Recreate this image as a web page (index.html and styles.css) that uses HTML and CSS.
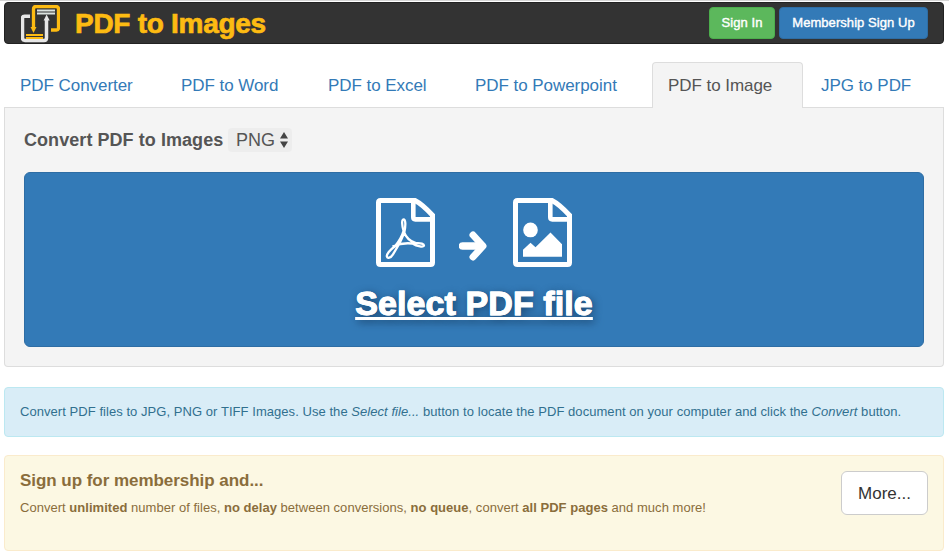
FILE: index.html
```html
<!DOCTYPE html>
<html lang="en">
<head>
<meta charset="utf-8">
<title>PDF to Images</title>
<link rel="stylesheet" href="styles.css">
</head>
<body>
<div class="page">
<header class="navbar">
  <svg class="logo" width="39" height="38" viewBox="0 0 39 38" fill="none">
    <path d="M9 11.3H3.500q-2 0-2 2V33q0 2.500 2.500 2.500h19q2.500 0 2.500-2.500V14" stroke="#e6e6e6" stroke-width="3.500"/>
    <path d="M22.600 15.500 25.600 9.500 28.700 15.500z" fill="#e6e6e6"/>
    <path d="M12.500 23V4q0-2.500 2.500-2.500h20q2.500 0 2.500 2.500V23q0 2-2 2H30" stroke="#fdbb12" stroke-width="3.300"/>
    <path d="M9.500 22h6l-3 6z" fill="#fdbb12"/>
    <path d="M16 5.600h18M16 8.500h18" stroke="#dce3e0" stroke-width="2"/>
    <path d="M5 30h17M5 33h17" stroke="#fdbb12" stroke-width="2"/>
  </svg>
  <h1 class="brand">PDF to Images</h1>
  <div class="account"><a class="btn green">Sign In</a><a class="btn blue">Membership Sign Up</a></div>
</header>
<nav class="tabs">
  <a>PDF Converter</a><a>PDF to Word</a><a>PDF to Excel</a><a>PDF to Powerpoint</a><a class="active">PDF to Image</a><a class="last">JPG to PDF</a>
</nav>
<main class="panel">
  <div class="format"><h2>Convert PDF to Images</h2>
    <button class="select"><span>PNG</span><svg width="10" height="18" viewBox="0 0 10 18" fill="#444"><path d="M1 7.500 5 1l4 6.500zM1 10.500 5 17l4-6.500z"/></svg></button>
  </div>
  <a class="upload">
    <span class="icons">
      <svg width="60" height="71" viewBox="0 0 60 70" preserveAspectRatio="none" fill="none" stroke="#fff">
        <path d="M4.500 3.500H39Q46 7 56.500 18V64.500Q56.500 66.500 54.500 66.500H4.500Q2.500 66.500 2.500 64.500V5.500Q2.500 3.500 4.500 3.500z" stroke-width="5"/>
        <path d="M37.300 4V20q0 2 2 2H57" stroke-width="4.600"/>
        <path d="M27.800 34.500C25.800 28 25.500 22 27.600 22s2.200 6 .8 12.500M27.500 33.500C30 40 34 44 40 45.500c5-.5 8 1 8 2.400 0 1.800-7 1-11.500-2-7-1-14 .5-20 3M28.500 33.500C26 43 21 50 17 56.500c-2.500 4-5.500 4-6 2.500-1-2 3-7 8-10.500 4-5 7-9.500 8.500-15" stroke-width="2.300"/>
      </svg>
      <svg class="arrow" width="30" height="30" viewBox="0 0 30 30" fill="none"><path d="M3.500 15H23" stroke="#fff" stroke-width="7.500" stroke-linecap="round"/><path d="M14 4 24 15 14 26" stroke="#fff" stroke-width="7" stroke-linecap="round" stroke-linejoin="round"/></svg>
      <svg width="60" height="71" viewBox="0 0 60 70" preserveAspectRatio="none" fill="none" stroke="#fff">
        <path d="M4.500 3.500H39Q46 7 56.500 18V64.500Q56.500 66.500 54.500 66.500H4.500Q2.500 66.500 2.500 64.500V5.500Q2.500 3.500 4.500 3.500z" stroke-width="5"/>
        <path d="M37.300 4V20q0 2 2 2H57" stroke-width="4.600"/>
        <circle cx="17.500" cy="32.500" r="7.300" fill="#fff" stroke="none"/>
        <path d="M10 59V52l7.500-7 5 4.500L37.500 35 49 46.500V59z" fill="#fff" stroke="none"/>
      </svg>
    </span>
    <span class="pick">Select PDF file</span>
  </a>
</main>
<section class="notice info"><p>Convert PDF files to JPG, PNG or TIFF Images. Use the <i>Select file...</i> button to locate the PDF document on your computer and click the <i>Convert</i> button.</p></section>
<section class="notice member">
  <div><h3>Sign up for membership and...</h3>
  <p>Convert <b>unlimited</b> number of files, <b>no delay</b> between conversions, <b>no queue</b>, convert <b>all PDF pages</b> and much more!</p></div>
  <a class="more">More...</a>
</section>
</div>
</body>
</html>
```
FILE: styles.css
```css
* { box-sizing: border-box; }
body { margin: 0; background: #fff; font-family: "Liberation Sans", Arial, sans-serif; color: #555; font-size: 13px; }
h1, h2, h3, p { margin: 0; white-space: nowrap; }
svg { display: block; flex: none; }
.page { height: 554px; border-top: 1px solid #d5d5d5; padding: 1px 5px 0 4px; overflow: hidden; }
.navbar { display: flex; height: 42px; background: #333; border: 1px solid #222; border-radius: 4px; padding: 0 15px 0 16px; align-items: center; }
.logo { margin-top: 1px; }
.brand { margin-left: 15px; padding-top: 2px; font-size: 28px; line-height: 38px; letter-spacing: -.28px; color: #fdbb12; -webkit-text-stroke: .7px #fdbb12; }
.account { display: flex; gap: 4px; margin-left: auto; }
.btn { height: 32px; line-height: 30px; border: 1px solid; border-radius: 4px; color: #fff; text-align: center; letter-spacing: .06px; -webkit-text-stroke: .4px #fff; }
.green { width: 66px; background: #5cb85c; border-color: #4cae4c; }
.blue { width: 149px; background: #337ab7; border-color: #2e6da4; }
.tabs { display: grid; grid-template-columns: 161px 147px 147px 193px 151px 141px; height: 46px; margin-top: 18px; border-bottom: 1px solid #ddd; font-size: 17px; line-height: 44px; color: #337ab7; }
.tabs a { height: 46px; padding: 1px 15px; border: solid transparent; border-width: 1px 1px 0; letter-spacing: -.05px; white-space: nowrap; }
.tabs .active { background: #f4f4f4; color: #555; border-color: #ddd; border-radius: 4px 4px 0 0; }
.tabs .last { padding-left: 17px; }
.panel { height: 259px; background: #f4f4f4; border: 1px solid #ddd; border-top: 0; border-radius: 0 0 4px 4px; padding: 20px 19px; }
.format { display: flex; height: 24px; align-items: center; margin-bottom: 20px; }
.format h2 { width: 204px; font-size: 18px; line-height: 24px; letter-spacing: .06px; }
.select { display: flex; align-items: center; justify-content: space-between; width: 64px; height: 24px; border: 0; border-radius: 4px; background: #ededed; padding: 0 3px 0 8px; font: 18px/24px "Liberation Sans", sans-serif; color: #555; }
.upload { display: flex; flex-direction: column; align-items: center; height: 175px; border: 1px solid #2e6da4; border-radius: 6px; background: #337ab7; padding-top: 24px; }
.icons { display: flex; height: 72px; }
.arrow { margin: 34px 24px 0 23px; }
.pick { margin-top: 14px; color: #fff; font-size: 34px; font-weight: bold; line-height: 40px; letter-spacing: .1px; text-decoration: underline; text-decoration-thickness: 3px; text-underline-offset: 2px; text-decoration-skip-ink: none; text-shadow: 2px 2px 8px #173c60; -webkit-text-stroke: .8px #fff; }
.notice { border: 1px solid; border-radius: 4px; padding: 15px; }
.info { height: 50px; margin-top: 20px; background: #d9edf7; border-color: #bce8f1; color: #31708f; line-height: 18px; letter-spacing: .053px; }
.member { display: flex; justify-content: space-between; height: 96px; margin-top: 18px; background: #fcf8e3; border-color: #faebcc; color: #8a6d3b; }
.member h3 { font-size: 17px; line-height: 19px; letter-spacing: -.04px; }
.member p { margin-top: 9px; line-height: 18px; letter-spacing: .028px; }
.more { width: 87px; height: 44px; border: 1px solid #ccc; border-radius: 6px; background: #fff; color: #333; font-size: 17px; line-height: 43px; text-align: center; }
```
